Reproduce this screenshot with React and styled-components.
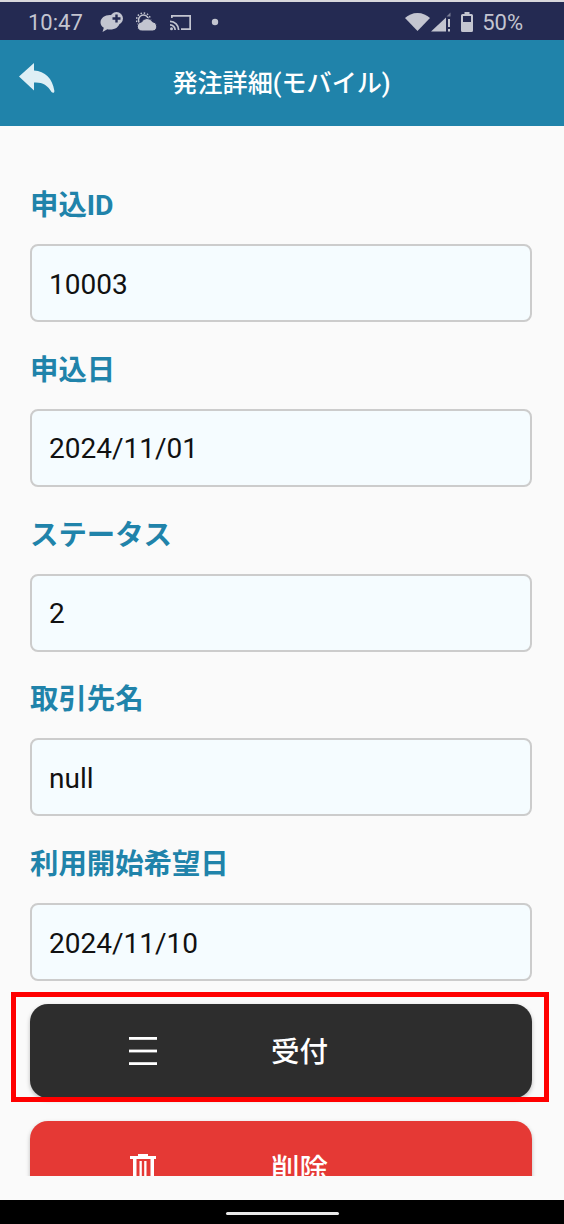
import React from 'react';
import styled, { createGlobalStyle } from 'styled-components';

const GlobalStyle = createGlobalStyle`
  html, body {
    margin: 0;
    padding: 0;
    background: #fafafa;
  }
  * {
    box-sizing: border-box;
  }
`;

const FONT = `Roboto, "Noto Sans CJK JP", sans-serif`;

const Screen = styled.div`
  width: 564px;
  height: 1224px;
  display: flex;
  flex-direction: column;
  background: #fafafa;
  font-family: ${FONT};
  overflow: hidden;
`;

const StatusBar = styled.div`
  height: 40px;
  flex-shrink: 0;
  display: flex;
  align-items: center;
  justify-content: space-between;
  padding: 2px 41px 0 28px;
  background: #242a52;
  border-top: 2px solid #d8d8dc;
  color: #c3c5d0;
`;

const StatusGroup = styled.div`
  display: flex;
  align-items: center;
`;

const Clock = styled.span`
  font-size: 22px;
  width: 72px;
`;

const Percent = styled.span`
  font-size: 22px;
  margin-left: 9px;
`;

const StatusIcon = styled.svg`
  display: block;
  flex-shrink: 0;
  margin-left: ${props => props.gap || 0}px;
  fill: #c3c5d0;
`;

const Header = styled.header`
  height: 86px;
  flex-shrink: 0;
  position: relative;
  display: flex;
  align-items: center;
  justify-content: center;
  background: #2083aa;
  color: #fff;
`;

const BackButton = styled.svg`
  position: absolute;
  left: 19px;
  top: 23px;
  width: 36px;
  height: 30px;
`;

const Title = styled.h1`
  margin: 2px 1px 0 0;
  font-size: 25.100px;
  font-weight: 500;
  line-height: 1;
`;

const Content = styled.main`
  height: 1050px;
  flex-shrink: 0;
  overflow: hidden;
  padding: 62px 32px 0 30px;
`;

const Fields = styled.div`
  margin-bottom: 23px;
`;

const Field = styled.div`
  display: flex;
  flex-direction: column;
  margin-bottom: 30.750px;

  &:last-child {
    margin-bottom: 0;
  }
`;

const Label = styled.label`
  height: 34px;
  line-height: 36px;
  margin-bottom: 22px;
  font-size: 28.400px;
  font-weight: 700;
  color: #2083aa;
`;

const Value = styled.div`
  height: 78px;
  display: flex;
  align-items: center;
  padding: 2px 17px 0;
  background: #f5fcff;
  border: 2px solid #ccc;
  border-radius: 8px;
  font-size: 28px;
  color: #111;
`;

const ActionButton = styled.button`
  position: relative;
  width: 100%;
  height: 94px;
  display: flex;
  align-items: center;
  margin: 0 0 23px;
  padding: 0 0 0 97px;
  border: none;
  border-radius: 18px;
  background: ${props => props.color};
  box-shadow: 0 2px 4px rgba(0, 0, 0, 0.25);
  color: #fff;
  font-family: ${FONT};
  font-size: 28.500px;
  font-weight: 500;
`;

const ButtonIcon = styled.svg`
  display: block;
  flex-shrink: 0;
  width: 32px;
  height: 32px;
  fill: #fff;
`;

const ButtonText = styled.span`
  margin-left: 112px;
  padding-top: 4px;
  line-height: 1;
`;

const Highlight = styled.div`
  position: absolute;
  left: -19px;
  right: -17px;
  top: -12px;
  bottom: -4px;
  border: 5px solid #f00;
  pointer-events: none;
`;

const BottomGap = styled.div`
  flex: 1;
  background: #fafafa;
`;

const NavBar = styled.div`
  height: 24px;
  flex-shrink: 0;
  display: flex;
  justify-content: center;
  background: #000;
`;

const NavHandle = styled.div`
  width: 113px;
  height: 3px;
  margin-top: 12px;
  border-radius: 2px;
  background: #e8e8e8;
`;

const fields = [
  { label: '申込ID', value: '10003' },
  { label: '申込日', value: '2024/11/01' },
  { label: 'ステータス', value: '2' },
  { label: '取引先名', value: 'null' },
  { label: '利用開始希望日', value: '2024/11/10' },
];

const App = () => {
  return (
    <Screen>
      <GlobalStyle />
      <StatusBar>
        <StatusGroup>
          <Clock>10:47</Clock>
          <StatusIcon width="23" height="20" viewBox="0 0 23 20">
            <path d="M10 3c5.300 0 9.500 3.200 9.500 7.400 0 4.200-4.200 7.100-9.500 7.100-.9 0-1.800-.1-2.700-.3L2.500 20l1.300-4.300C1.700 14.400.5 12.600.5 10.400.5 6.200 4.700 3 10 3z" />
            <circle cx="16.500" cy="6.500" r="6.500" />
            <path d="M15.300 2.500h2.400v2.800h2.800v2.400h-2.800v2.800h-2.400V7.700h-2.800V5.300h2.800z" fill="#242a52" />
          </StatusIcon>
          <StatusIcon gap={13} width="22" height="20" viewBox="0 0 22 20">
            <circle cx="7.500" cy="8" r="5" fill="none" stroke="#c3c5d0" strokeWidth="1.500" />
            <circle cx="7.500" cy="8" r="7" fill="none" stroke="#c3c5d0" strokeWidth="1.500" strokeDasharray="1.500 1.800" />
            <path d="M6 19a4.500 4.500 0 0 1-.4-9 6 6 0 0 1 10.800-.3A4.700 4.700 0 0 1 17 19z" stroke="#242a52" strokeWidth="1" />
          </StatusIcon>
          <StatusIcon gap={12} width="22" height="17" viewBox="0 0 22 17">
            <path d="M1 4V1h20v15H11v-1.700h8.300V2.700H2.700V4z" />
            <path d="M0 6.500a9.500 9.500 0 0 1 9.500 9.500H7.800A7.800 7.800 0 0 0 0 8.200zM0 10a6 6 0 0 1 6 6H4.300A4.300 4.300 0 0 0 0 11.700z" />
            <circle cx="1.500" cy="14.800" r="1.500" />
          </StatusIcon>
          <StatusIcon gap={19} width="8" height="8" viewBox="0 0 8 8">
            <circle cx="4" cy="4" r="3.200" />
          </StatusIcon>
        </StatusGroup>
        <StatusGroup>
          <StatusIcon width="25" height="18" viewBox="0 0 25 18">
            <path d="M12.500 18L0 5C3.200 2 7.600 0 12.500 0s9.300 2 12.500 5z" />
          </StatusIcon>
          <StatusIcon gap={1} width="20" height="20" viewBox="0 0 20 20">
            <path d="M0 19.500L15 5.500v14z" />
            <path d="M15.500 4.500L19.500.5v4z" opacity="0.550" />
            <path d="M17 7h2v8h-2zM17 17h2v2.500h-2z" />
          </StatusIcon>
          <StatusIcon gap={10} width="12" height="20" viewBox="0 0 12 20">
            <path d="M3.500 0h5v2h2A1.500 1.500 0 0 1 12 3.500v15a1.500 1.500 0 0 1-1.500 1.500h-9A1.500 1.500 0 0 1 0 18.500v-15A1.500 1.500 0 0 1 1.500 2h2z" />
            <rect x="2" y="4" width="8" height="6" fill="#242a52" />
          </StatusIcon>
          <Percent>50%</Percent>
        </StatusGroup>
      </StatusBar>

      <Header>
        <BackButton viewBox="0 0 36 30" fill="#dfeff5">
          <path d="M15 0L0 13.500 15 27.500v-8c8-.6 13.500 2.500 17.500 9.500 1.500 1.200 3.200.8 2.800-1.500C33.500 15.500 26 8 15 7.500z" />
        </BackButton>
        <Title>発注詳細(モバイル)</Title>
      </Header>

      <Content>
        <Fields>
          {fields.map(field => (
            <Field key={field.label}>
              <Label>{field.label}</Label>
              <Value>{field.value}</Value>
            </Field>
          ))}
        </Fields>
        <ActionButton color="#2d2d2d">
          <ButtonIcon viewBox="0 0 32 32">
            <rect x="2" y="2" width="28" height="2.800" />
            <rect x="2" y="14.600" width="28" height="2.800" />
            <rect x="2" y="27.200" width="28" height="2.800" />
          </ButtonIcon>
          <ButtonText>受付</ButtonText>
          <Highlight />
        </ActionButton>
        <ActionButton color="#e53935">
          <ButtonIcon viewBox="0 0 32 32">
            <rect x="11" y="2" width="10" height="2.500" />
            <rect x="3" y="4" width="26" height="3" />
            <rect x="6" y="7" width="3.500" height="25" />
            <rect x="12.500" y="9" width="2.300" height="23" />
            <rect x="17.200" y="9" width="2.300" height="23" />
            <rect x="23.500" y="7" width="3.500" height="25" />
          </ButtonIcon>
          <ButtonText>削除</ButtonText>
        </ActionButton>
      </Content>

      <BottomGap />
      <NavBar>
        <NavHandle />
      </NavBar>
    </Screen>
  );
};

export default App;
